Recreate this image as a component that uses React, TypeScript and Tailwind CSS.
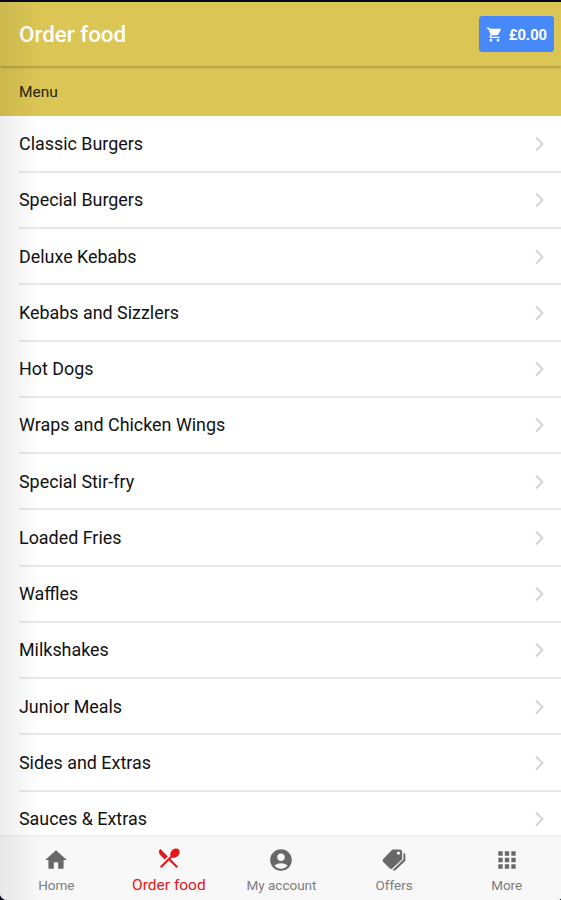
import React from 'react';
import { IconType } from 'react-icons';
import { MdAccountCircle, MdApps, MdHome, MdRestaurantMenu, MdShoppingCart } from 'react-icons/md';
import { IoMdPricetags } from 'react-icons/io';

interface Tab {
  label: string;
  icon: IconType;
  iconClass: string;
  active?: boolean;
}

const categories: string[] = [
  'Classic Burgers',
  'Special Burgers',
  'Deluxe Kebabs',
  'Kebabs and Sizzlers',
  'Hot Dogs',
  'Wraps and Chicken Wings',
  'Special Stir-fry',
  'Loaded Fries',
  'Waffles',
  'Milkshakes',
  'Junior Meals',
  'Sides and Extras',
  'Sauces & Extras',
];

const tabs: Tab[] = [
  { label: 'Home', icon: MdHome, iconClass: 'size-[26px]' },
  { label: 'Order food', icon: MdRestaurantMenu, iconClass: 'size-[26px]', active: true },
  { label: 'My account', icon: MdAccountCircle, iconClass: 'size-[26px]' },
  { label: 'Offers', icon: IoMdPricetags, iconClass: 'size-[26px]' },
  { label: 'More', icon: MdApps, iconClass: 'size-[26px]' },
];

const Header: React.FC = () => (
  <header className="relative flex h-[64px] shrink-0 items-center justify-between bg-[#dbc554] pl-[19px] pr-[7px] shadow-[0_1px_3px_rgba(0,0,0,0.3)]">
    <h1 className="text-[22.4px] font-medium leading-none text-white">Order food</h1>
    <button className="flex h-[36px] w-[75px] items-center justify-end gap-[6px] rounded-[3px] bg-[#4788fb] pr-[7px] text-white">
      <MdShoppingCart className="size-[17px]" />
      <span className="pt-[2px] text-[14.7px] font-bold leading-none">£0.00</span>
    </button>
  </header>
);

const CategoryRow: React.FC<{ name: string }> = ({ name }) => (
  <li className="ml-[19px] flex h-[56.25px] shrink-0 items-center justify-between border-b-2 border-[#e9e9e9] pr-4">
    <span className="pt-px text-[17.9px] leading-none text-[#111]">{name}</span>
    <svg className="mt-px h-4 w-[11px] text-[#d2d2d2]" viewBox="0 0 11 16" fill="none" stroke="currentColor" strokeWidth="1.8">
      <path d="M2 1.5 8.5 8 2 14.5" />
    </svg>
  </li>
);

const TabBar: React.FC = () => (
  <nav className="-mr-[2px] flex h-[65px] shrink-0 border-t-2 border-[#f0f0f0] bg-[#f8f8f8]">
    {tabs.map(({ label, icon: Icon, iconClass, active }) => (
      <button
        key={label}
        className={`flex flex-1 flex-col items-center ${active ? 'pt-[8px] text-[#e3161b]' : 'pt-[10px] text-[#686868]'}`}
      >
        <Icon className={iconClass} />
        <span className={active ? 'mt-[7px] text-[15.5px] leading-none' : 'mt-[6px] text-[13.5px] leading-none text-[#7c7c7c]'}>
          {label}
        </span>
      </button>
    ))}
  </nav>
);

const App: React.FC = () => {
  return (
    <div className="h-screen w-full bg-[#080820]">
      <div className="relative flex h-full w-full flex-col overflow-hidden rounded-bl-[7px] rounded-br-[3px] bg-white font-['Roboto',sans-serif]">
        <div className="h-[2px] shrink-0 bg-[#080820]" />
        <Header />
        <div className="flex h-[50px] shrink-0 items-center bg-[#dbc554] pl-[19px] pt-[3px] text-[15.5px] leading-none text-[#29250f]">
          Menu
        </div>
        <ul className="flex min-h-0 flex-1 flex-col overflow-hidden pt-[0.5px]">
          {categories.map((name) => (
            <CategoryRow key={name} name={name} />
          ))}
        </ul>
        <TabBar />
        <div className="pointer-events-none absolute inset-y-0 left-0 w-[40px] bg-gradient-to-r from-black/7 to-transparent" />
      </div>
    </div>
  );
};

export default App;
